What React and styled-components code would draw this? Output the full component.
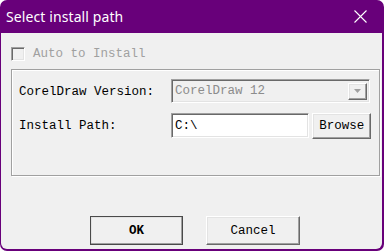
import React from 'react'
import styled, { createGlobalStyle, css } from 'styled-components'

const mono = `"Liberation Mono", "DejaVu Sans Mono", monospace`

const GlobalStyle = createGlobalStyle`
  html, body {
    margin: 0;
    padding: 0;
    background: #ffffff;
  }
  body {
    width: 384px;
    height: 251px;
    overflow: hidden;
  }
`

const Window = styled.div`
  box-sizing: border-box;
  width: 384px;
  height: 251px;
  display: flex;
  flex-direction: column;
  background: #68007a;
  border-radius: 7px;
  overflow: hidden;
  padding: 0 2px 2px 1px;
`

const TitleBar = styled.div`
  height: 33px;
  flex: none;
  display: flex;
  align-items: center;
  justify-content: space-between;
  padding: 0 15px 0 5px;
  color: #ffffff;
  font-family: "Noto Sans", "Open Sans", sans-serif;
  font-size: 14px;
`

const Title = styled.span`
  margin-top: -1px;
  letter-spacing: 0.1px;
`

const CloseIcon = () => (
  <svg width="13" height="13" viewBox="0 0 13 13">
    <path d="M0.5 0.5 L12.5 12.5 M12.5 0.5 L0.5 12.5" stroke="#ffffff" strokeWidth="1.1" />
  </svg>
)

const Client = styled.div`
  flex: 1;
  display: flex;
  flex-direction: column;
  background: #f0f0f0;
  border-radius: 0 0 6px 6px;
  font-family: ${mono};
  font-size: 12.5px;
  color: #000000;
`

const CheckRow = styled.label`
  display: flex;
  align-items: center;
  gap: 8px;
  margin: 14px 0 0 10px;
  height: 14px;
  color: #a0a0a0;
`

const CheckBox = styled.span`
  box-sizing: border-box;
  width: 14px;
  height: 14px;
  background: #f0f0f0;
  border-top: 1px solid #a0a0a0;
  border-left: 1px solid #a0a0a0;
  border-right: 1px solid #ffffff;
  border-bottom: 1px solid #ffffff;
  box-shadow: inset 1px 1px 0 #696969, inset -1px -1px 0 #e3e3e3;
`

const GroupBox = styled.div`
  box-sizing: border-box;
  margin: 8px 0 0 10px;
  width: 369px;
  height: 107px;
  border: 1px solid #a0a0a0;
  box-shadow: inset 1px 1px 0 #ffffff, 1px 1px 0 #ffffff;
  padding: 9px 8px 0 7px;
  display: flex;
  flex-direction: column;
  gap: 9px;
`

const FieldRow = styled.div`
  display: flex;
  align-items: center;
  height: ${p => p.$h}px;
`

const Label = styled.span`
  width: 152px;
  flex: none;
  padding-top: 2px;
`

const sunken = css`
  box-sizing: border-box;
  border-top: 1px solid #a0a0a0;
  border-left: 1px solid #a0a0a0;
  border-right: 1px solid #ffffff;
  border-bottom: 1px solid #ffffff;
  box-shadow: inset 1px 1px 0 #696969, inset -1px -1px 0 #e3e3e3;
`

const raised = css`
  box-sizing: border-box;
  border-top: 1px solid #ffffff;
  border-left: 1px solid #ffffff;
  border-right: 1px solid #696969;
  border-bottom: 1px solid #696969;
  box-shadow: inset -1px -1px 0 #a0a0a0, inset 1px 1px 0 #e3e3e3;
  background: #f0f0f0;
`

const Combo = styled.div`
  ${sunken};
  width: 199px;
  height: 24px;
  display: flex;
  align-items: center;
  justify-content: space-between;
  padding: 0 2px 0 3px;
  color: #8c8c8c;
  background: #f0f0f0;
`

const DropButton = styled.span`
  ${raised};
  width: 19px;
  height: 17px;
  display: flex;
  align-items: center;
  justify-content: center;
`

const Arrow = () => (
  <svg width="7" height="4" viewBox="0 0 7 4">
    <path d="M0 0 H7 L3.5 4 Z" fill="#a0a0a0" />
  </svg>
)

const Edit = styled.div`
  ${sunken};
  width: 139px;
  height: 25px;
  background: #ffffff;
  display: flex;
  align-items: center;
  padding: 1px 0 0 3px;
`

const Button = styled.button`
  ${raised};
  font-family: ${mono};
  font-size: 12.5px;
  color: #000000;
  padding: 0;
  margin: 0;
  width: ${p => p.$w}px;
  height: ${p => p.$h}px;
  display: flex;
  align-items: center;
  justify-content: center;
  ${p => p.$default && css`
    outline: 1px solid #4a4a4a;
    outline-offset: -1px;
    font-weight: bold;
  `}
`

const BrowseButton = styled(Button)`
  margin-left: 3px;
  margin-top: 1px;
`

const ButtonRow = styled.div`
  display: flex;
  gap: 23px;
  margin: 40px 0 0 89px;
`

export default function App() {
  return (
    <>
      <GlobalStyle />
      <Window>
        <TitleBar>
          <Title>Select install path</Title>
          <CloseIcon />
        </TitleBar>
        <Client>
          <CheckRow>
            <CheckBox />
            Auto to Install
          </CheckRow>
          <GroupBox>
            <FieldRow $h={24}>
              <Label>CorelDraw Version:</Label>
              <Combo>
                CorelDraw 12
                <DropButton>
                  <Arrow />
                </DropButton>
              </Combo>
            </FieldRow>
            <FieldRow $h={26}>
              <Label>Install Path:</Label>
              <Edit>C:\</Edit>
              <BrowseButton $w={59} $h={26}>Browse</BrowseButton>
            </FieldRow>
          </GroupBox>
          <ButtonRow>
            <Button $w={93} $h={29} $default>OK</Button>
            <Button $w={94} $h={29}>Cancel</Button>
          </ButtonRow>
        </Client>
      </Window>
    </>
  )
}
